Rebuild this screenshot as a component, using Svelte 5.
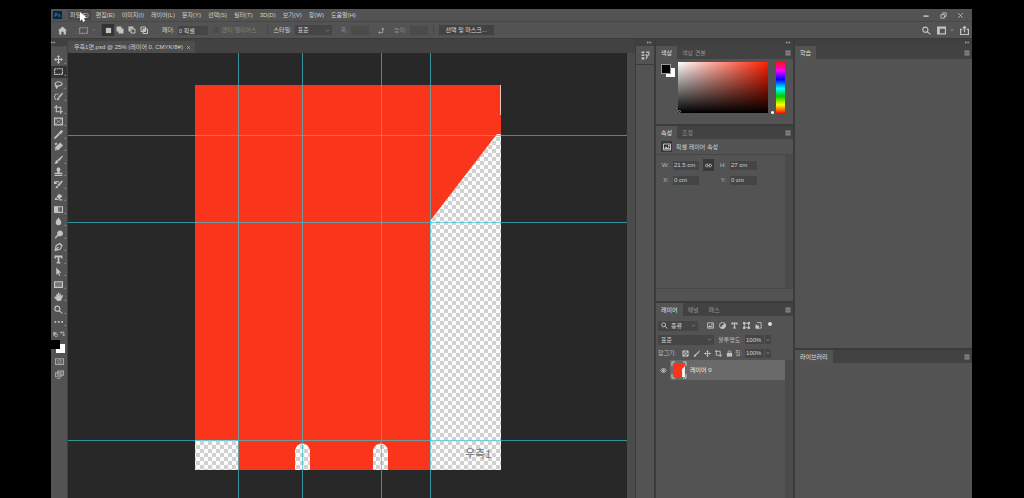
<script>
  const menus = ['파일(F)', '편집(E)', '이미지(I)', '레이어(L)', '문자(Y)', '선택(S)', '필터(T)', '3D(D)', '보기(V)', '창(W)', '도움말(H)'];

  // Each icon sits on a 16 x 16 grid: s = stroked path, f = filled path.
  const icons = {
    move: { s: 'M8 2v12M2 8h12', f: 'M8 0l3 4H5zM8 16l3-4H5zM0 8l4-3v6zM16 8l-4-3v6z' },
    marquee: { dash: 'M1 3h14v10H1z' },
    lasso: { s: 'M4 10C0 8 2 3 8 3s8 4 5 6-6 2-9 1zM4 10c-2 1-1 3 1 2s1 2-1 3' },
    quick: { dash: 'M8 13a5 5 0 1 1 0-9', f: 'M15 1l1 2-6 7-2-2zM7 9l3 2c-1 3-3 3-5 3 2-2 1-3 2-5z' },
    crop: { s: 'M4 0v12h12M0 4h12v12' },
    frame: { s: 'M1 2h14v12H1z', thin: 'M1 2l14 12M15 2L1 14' },
    dropper: { s: 'M9 6l-7 7-1 2 2-1 7-7', f: 'M8 4l2-1 2-2c2-2 5 1 3 3l-2 2-1 2z' },
    heal: { f: 'M11 1l5 5-9 9-6-5zM1 3l3-2 2 2-3 3z', s: 'M2 12l2 3' },
    brush: { f: 'M15 1l1 1-7 9-3-2zM5 9l3 3c-1 3-4 4-7 3 2-2 1-4 4-6z' },
    stamp: { f: 'M6 8C3 4 5 1 8 1s5 3 2 7v2h5v3H1v-3h5zM1 14h14v2H1z' },
    history: { f: 'M14 1l2 1-7 9-3-2zM5 10l3 2c-1 2-3 3-6 3 2-2 1-3 3-5z', s: 'M2 6c1-4 5-4 7-2M1 2v4h4' },
    eraser: { f: 'M9 3l6 4-5 6-6-4zM3 10l6 4H2c-1-1-1-2 1-4z', s: 'M9 14h6' },
    gradient: { f: 'M1 3h6v10H1z', s: 'M1 3h14v10H1z', tint: 'M7 3h4v10H7z' },
    blur: { f: 'M8 1c3 4 5 6 5 9 0 6-10 6-10 0 0-3 2-5 5-9z' },
    dodge: { f: 'M10 1a5 5 0 1 1-2 9l-5 5-2-1 5-6a5 5 0 0 1 4-7z' },
    pen: { s: 'M2 15l2-9 6-3 4 4-3 6zM2 15l6-6M10 2l5 5' },
    type: { f: 'M1 1h14v5h-2l-1-2H9.500v8.500l2 .5v2H4.500v-2l2-.5V4H4L3 6H1z' },
    arrow: { f: 'M4 1l9 9H9l2 5-2 1-2-5-3 3z' },
    rect: { s: 'M1 3h14v10H1z', tint: 'M1 3h14v10H1z' },
    hand: { f: 'M4 9V4l2-1 1 4V1h2v6l1-5 2 1v5l2-3 2 1-3 8-3 3H7l-4-4-3-4 2-1z' },
    zoom: { s: 'M6 2a4 4 0 1 1 0 9 4 4 0 0 1 0-9M9 10l6 5' },
    dots: { f: 'M1 7h3v3H1zM7 7h3v3H7zM13 7h3v3h-3z' },
    home: { f: 'M8 1l8 7h-2v7h-4v-5H6v5H2V8H0z' },
    selNew: { f: 'M2 2h12v12H2z' },
    selAdd: { f: 'M1 1h10v4h4v10H5v-4H1z' },
    selSub: { f: 'M1 1h10v4H5v6H1z', s: 'M6 6h8v8H6z' },
    selInt: { s: 'M2 2h9v9H2zM6 6h9v9H6z', f: 'M6 6h5v5H6z' },
    swap: { s: 'M3 13h8V4', f: 'M5 9v7l-5-3.500zM7 6h8l-4-5z' },
    layout: { s: 'M1 2h14v12H1zM1 4h14', f: 'M1 2h4v12H1z' },
    share: { s: 'M4 6H1v9h14V6h-3M8 11V2M5 4l3-3 3 3' },
    actions: { f: 'M1 1h5v3H1zM1 6h5v3H1zM1 11h5v4H1z', s: 'M9 2h5v5H9l2 3-2 4' },
    image: { s: 'M1 2h14v12H1z', f: 'M2 12l4-5 3 3 2-2 3 4zM10 4h3v3h-3z' },
    adjust: { s: 'M8 1a7 7 0 1 1 0 14A7 7 0 0 1 8 1', f: 'M13 3a7 7 0 0 1-10 10z' },
    shape: { s: 'M3 3h10v10H3z', f: 'M0 0h5v5H0zM11 0h5v5h-5zM0 11h5v5H0zM11 11h5v5h-5z' },
    smart: { s: 'M5 1h9v13H3V5', f: 'M1 8h8v7H1z' },
    checker: { s: 'M2 2h12v12H2z', f: 'M2 2h4v4H2zM10 2h4v4h-4zM6 6h4v4H6zM2 10h4v4H2zM10 10h4v4h-4z' },
    artboard: { s: 'M3 0v12h13M0 3h12v13' },
    lock: { f: 'M2 7h12v8H2z', s: 'M5 7V4c0-3 6-3 6 0v3' },
    eye: { s: 'M1 8c4-6 10-6 14 0-4 6-10 6-14 0z', f: 'M8 5a3 3 0 1 1 0 6 3 3 0 0 1 0-6' },
    link: { s: 'M7 5H4c-4 0-4 6 0 6h3M9 5h3c4 0 4 6 0 6H9M5 8h6' },
    mask: { s: 'M1 3h14v10H1z', dash: 'M8 5a3 3 0 1 1 0 6 3 3 0 0 1 0-6' },
    screen: { s: 'M5 2h10v7H5zM1 5h10v7H1zM4 15h5' },
    smallSwap: { s: 'M3 7V3h7v8M1 5l2-3 3 3M7 9l3 4 3-4' },
    min: { f: 'M1 9h14v4H1z' },
    restore: { s: 'M6 6V2h8v8h-4M2 6h8v8H2z' },
    close: { s: 'M3 3l10 10M13 3L3 13' },
    burger: { s: 'M1 3h14M1 8h14M1 13h14' },
    chevron: { s: 'M3 5l5 6 5-6' },
    collapse: { f: 'M0 4l7 4-7 4zM8 4l7 4-7 4z' }
  };

  const tools = [
    ['move', '이동'], ['marquee', '사각형 선택 윤곽'], ['lasso', '올가미'], ['quick', '빠른 선택'],
    ['crop', '자르기'], ['frame', '프레임'], ['dropper', '스포이드'], ['heal', '복구 브러시'],
    ['brush', '브러시'], ['stamp', '복제 도장'], ['history', '작업 내역 브러시'], ['eraser', '지우개'],
    ['gradient', '그레이디언트'], ['blur', '흐림 효과'], ['dodge', '닷지'], ['pen', '펜'],
    ['type', '문자'], ['arrow', '패스 선택'], ['rect', '사각형'], ['hand', '손'],
    ['zoom', '돋보기'], ['dots', '도구 모음 편집']
  ];
  let tool = $state('marquee');
  const filters = ['image', 'adjust', 'type', 'shape', 'smart'];
  const locks = ['checker', 'brush', 'move', 'artboard', 'lock'];
  const verticals = [170, 234, 313, 362];
  const horizontals = [82, 169, 387];
</script>

{#snippet icon(name, size = 9)}
  <svg class="ico" width={size} height={size} viewBox="0 0 16 16" aria-hidden="true">
    {#if icons[name].tint}<path class="tint" d={icons[name].tint} />{/if}
    {#if icons[name].s}<path class="stroke" d={icons[name].s} />{/if}
    {#if icons[name].thin}<path class="stroke thin" d={icons[name].thin} />{/if}
    {#if icons[name].dash}<path class="stroke dash" d={icons[name].dash} />{/if}
    {#if icons[name].f}<path class="fill" d={icons[name].f} />{/if}
  </svg>
{/snippet}

{#snippet tabs(names)}
  <div class="tabs" role="tablist">
    {#each names as name, i}
      <button class="tab" class:on={i === 0} role="tab" aria-selected={i === 0}>{name}</button>
    {/each}
    <button class="burger" aria-label="패널 메뉴">{@render icon('burger', 6)}</button>
  </div>
{/snippet}

{#snippet select(label, value, kind)}
  <span class="select {kind}">
    <select aria-label={label}><option>{value}</option></select>
    {@render icon('chevron', 5)}
  </span>
{/snippet}

<div class="app">
  <header class="menubar">
    <span class="logo">Ps</span>
    <nav>
      {#each menus as m, i}<button class:hover={i === 0}>{m}</button>{/each}
      <svg class="cursor" width="8" height="11" viewBox="0 0 8 11" aria-hidden="true"><path d="M1 0v9l2-2 1 3 2-1-1-3h3z" /></svg>
    </nav>
    <div class="window">
      <button aria-label="최소화">{@render icon('min', 6)}</button>
      <button aria-label="복원">{@render icon('restore', 7)}</button>
      <button aria-label="닫기">{@render icon('close', 7)}</button>
    </div>
  </header>

  <div class="options">
    <button class="home" aria-label="홈">{@render icon('home', 9)}</button>
    <button class="preset" aria-label="도구 사전 설정">{@render icon('marquee', 9)}{@render icon('chevron', 4)}</button>
    <div class="modes">
      <button class="on" aria-label="새 선택">{@render icon('selNew', 7)}</button>
      <button aria-label="추가">{@render icon('selAdd', 8)}</button>
      <button aria-label="빼기">{@render icon('selSub', 8)}</button>
      <button aria-label="교차">{@render icon('selInt', 8)}</button>
    </div>
    <div class="field feather"><label for="feather">페더:</label><input id="feather" value="0 픽셀" /></div>
    <label class="alias"><input type="checkbox" disabled />앤티 앨리어스</label>
    <div class="field style"><span>스타일:</span>{@render select('스타일', '표준', 'short')}</div>
    <div class="field dim"><label for="ow">폭:</label><input id="ow" disabled /></div>
    <button class="swap" aria-label="폭과 높이 교체">{@render icon('swap', 7)}</button>
    <div class="field dim"><label for="oh">높이:</label><input id="oh" disabled /></div>
    <div class="refine"><button>선택 및 마스크...</button></div>
    <div class="right">
      <button aria-label="검색">{@render icon('zoom', 9)}</button>
      <button class="pair" aria-label="작업 영역">{@render icon('layout', 9)}{@render icon('chevron', 4)}</button>
      <button aria-label="공유">{@render icon('share', 9)}</button>
    </div>
  </div>

  <div class="work">
    <aside class="toolbar">
      <div class="strip">{@render icon('collapse', 5)}</div>
      <div class="grip"></div>
      <div class="tools">
        {#each tools as [id, label]}
          <button class:on={tool === id} aria-label={label} onclick={() => (tool = id)}>{@render icon(id, 9)}</button>
        {/each}
      </div>
      <div class="mini">{@render icon('selSub', 5)}{@render icon('smallSwap', 6)}</div>
      <div class="colors"><i class="back"></i><i class="front"></i></div>
      <button class="extra" aria-label="빠른 마스크">{@render icon('mask', 9)}</button>
      <button class="extra" aria-label="화면 모드">{@render icon('screen', 9)}</button>
    </aside>

    <main class="doc">
      <div class="doctabs">
        <div class="doctab"><span>우측1면.psd @ 25% (레이어 0, CMYK/8#)</span><button aria-label="문서 닫기">{@render icon('close', 5)}</button></div>
      </div>
      <div class="stage">
        <svg class="canvas" role="img" aria-label="우측1">
          <defs>
            <pattern id="check" width="8" height="8" patternUnits="userSpaceOnUse">
              <rect width="8" height="8" fill="#fbfbfb" />
              <path d="M0 0h4v4H0zM4 4h4v4H4z" fill="#d0d0d0" />
            </pattern>
          </defs>
          <rect x="127" y="32" width="306" height="385" fill="#f9361c" />
          <path fill="url(#check)" d="M362 168L429 81h4v336h-71zM127 387h43v30h-43zM227 417v-19a7 7 0 0 1 15 0v19zM305 417v-19a7 7 0 0 1 15 0v19z" />
          <path d="M432.5 32v30" stroke="#f3c4bd" />
          <text x="397" y="405">우측1</text>
          <g class="guides">
            {#each horizontals as y}
              <rect x="0" {y} width="100%" height="1" />
            {/each}
            {#each verticals as x}
              <rect {x} y="0" width="1" height="100%" />
            {/each}
          </g>
        </svg>
        <div class="scroll"></div>
      </div>
    </main>

    <aside class="dock">
      <div class="strip">{@render icon('collapse', 5)}</div>
      <button aria-label="작업 내역">{@render icon('actions', 9)}</button>
      <div class="rest"></div>
    </aside>

    <aside class="panels">
      <div class="strip">{@render icon('collapse', 5)}</div>
      <section class="color">
        {@render tabs(['색상', '색상 견본'])}
        <div class="picker">
          <div class="colors big"><i class="back"></i><i class="front"></i></div>
          <div class="field2d"><i></i></div>
          <div class="hue"><i></i></div>
        </div>
      </section>

      <section class="props">
        {@render tabs(['속성', '조정'])}
        <h2><span>{@render icon('image', 8)}</span>픽셀 레이어 속성</h2>
        <div class="propbody">
          <div class="grid">
            <label for="pw">W:</label><input id="pw" value="21.5 cm" />
            <button class="link" aria-label="비율 고정">{@render icon('link', 7)}</button>
            <label for="ph">H:</label><input id="ph" value="27 cm" />
            <label for="px">X:</label><input id="px" value="0 cm" /><span></span>
            <label for="py">Y:</label><input id="py" value="0 cm" />
          </div>
          <div class="scroll"></div>
        </div>
      </section>

      <section class="layers">
        {@render tabs(['레이어', '채널', '패스'])}
        <div class="row filter">
          <span class="search">{@render icon('zoom', 7)}{@render select('필터', '종류', 'full')}</span>
          <div class="icons">
            {#each filters as f}<button aria-label={f}>{@render icon(f, 7)}</button>{/each}
            <button class="toggle" aria-label="필터 켜기"></button>
          </div>
        </div>
        <div class="row blend">
          {@render select('혼합 모드', '표준', 'wide')}
          <label for="op">불투명도:</label>
          <span class="num"><input id="op" value="100%" />{@render icon('chevron', 4)}</span>
        </div>
        <div class="row locks">
          <span class="caption">잠그기:</span>
          <div class="icons">
            {#each locks as l}<button aria-label={l}>{@render icon(l, 7)}</button>{/each}
          </div>
          <label for="fl">칠:</label>
          <span class="num"><input id="fl" value="100%" />{@render icon('chevron', 4)}</span>
        </div>
        <div class="list">
          <div class="items">
            <div class="layer">
              <button aria-label="표시">{@render icon('eye', 7)}</button>
              <div class="name">
                <svg width="16" height="18" viewBox="0 0 16 18" aria-hidden="true">
                  <path d="M2 2h12v14H2z" fill="#f9361c" /><path d="M14 5v11h-3V8z" fill="#eee" />
                  <path d="M1 5V1h3M12 1h3v4M15 13v4h-3M4 17H1v-4" fill="none" stroke="#ccc" />
                </svg>
                레이어 0
              </div>
            </div>
          </div>
          <div class="scroll"></div>
        </div>
      </section>
    </aside>

    <aside class="side">
      <div class="strip">{@render icon('collapse', 5)}</div>
      <section class="learn">{@render tabs(['학습'])}</section>
      <section class="library">{@render tabs(['라이브러리'])}</section>
    </aside>
  </div>
</div>

<style>
  :global(body) { background: #000; }
  .app, .app * { box-sizing: border-box; }
  .app {
    height: 100vh; padding: 9px 52px 0 51px; overflow: hidden;
    display: flex; flex-direction: column; background: #000; color: #d2d2d2;
    font: 6px/8px "Liberation Sans", "Noto Sans CJK KR", sans-serif;
  }
  button, input, select { font: inherit; color: inherit; border: 0; margin: 0; padding: 0; background: none; border-radius: 0; }
  button { display: flex; align-items: center; justify-content: center; white-space: nowrap; }
  input { min-width: 0; height: 9px; padding: 0 1px; background: #454545; }
  .ico { display: block; flex: none; color: #c4c4c4; }
  .stroke { fill: none; stroke: currentColor; stroke-width: 2; }
  .thin { stroke-width: 1; }
  .dash { stroke-dasharray: 3 1; }
  .fill { fill: currentColor; }
  .tint { fill: #777; }

  .menubar { height: 13px; flex: none; display: flex; align-items: center; background: #535353; border-bottom: 1px solid #484848; }
  .logo { width: 9px; height: 8px; margin: 0 6px 0 2px; background: #07263a; color: #2f9bd0; text-align: center; font-size: 5px; }
  nav { position: relative; display: flex; flex: 1; gap: 3px; }
  nav button { padding: 0 2px; height: 10px; }
  nav .hover { background: #474747; }
  .cursor { position: absolute; left: 11px; top: 2px; fill: #fff; }
  .window { display: flex; gap: 3px; padding-right: 5px; }
  .window button { width: 14px; height: 10px; }

  .options { height: 17px; flex: none; display: flex; align-items: center; background: #535353; border-bottom: 1px solid #3b3b3b; }
  .home { width: 22px; height: 12px; }
  .preset { width: 29px; gap: 4px; border-right: 1px solid #4a4a4a; height: 12px; }
  .preset .ico { color: #9a9a9a; }
  .modes { display: flex; }
  .modes button { width: 12px; height: 12px; }
  .modes .on { background: #333; }
  .field { display: flex; align-items: center; gap: 3px; white-space: nowrap; }
  .feather { margin-left: 12px; }
  .feather input { width: 30px; }
  .alias { display: flex; align-items: center; gap: 3px; margin-left: 5px; color: #808080; white-space: nowrap; }
  .alias input { appearance: none; width: 6px; height: 6px; background: #4b4b4b; }
  .style { margin-left: 10px; padding-left: 6px; border-left: 1px solid #484848; }
  .dim { margin-left: 9px; color: #848484; }
  .dim input { width: 18px; background: #4b4b4b; }
  .swap { margin-left: 9px; }
  .swap .ico { color: #a0a0a0; }
  .refine { margin-left: 5px; padding-left: 5px; border-left: 1px solid #484848; }
  .refine button { width: 55px; height: 10px; background: #424242; color: #dedede; }
  .right { margin-left: auto; display: flex; align-items: center; gap: 6px; padding-right: 3px; }
  .pair { gap: 4px; }
  .select { position: relative; display: flex; align-items: center; height: 10px; background: #454545; }
  .select select { appearance: none; width: 100%; padding: 0 8px 0 3px; line-height: 8px; outline: 0; }
  .select .ico { position: absolute; right: 2px; color: #8d8d8d; }
  .short { width: 37px; }
  .wide { width: 56px; }
  .full { flex: 1; min-width: 0; }

  .work { flex: 1; min-height: 0; display: flex; background: #3b3b3b; }
  .strip { height: 7px; flex: none; display: flex; align-items: center; background: #404040; }
  .strip .ico { color: #999; }

  .toolbar { width: 17px; flex: none; display: flex; flex-direction: column; background: #535353; border-right: 1px solid #404040; }
  .grip { height: 7px; margin: 0 3px; border-top: 1px solid #4a4a4a; }
  .tools { height: 275px; display: grid; grid-template-rows: repeat(22, 1fr); }
  .tools button { position: relative; padding-right: 1px; }
  .tools button::after { content: ''; position: absolute; right: 1px; bottom: 2px; border: 1px solid transparent; border-right-color: #888; border-bottom-color: #888; }
  .tools .on { background: #333; }
  .mini { height: 12px; display: flex; align-items: center; justify-content: center; gap: 2px; }
  .colors { position: relative; height: 14px; }
  .colors i { position: absolute; width: 9px; height: 9px; }
  .back { left: 5px; top: 4px; background: #fff; }
  .front { left: 0; top: 0; background: #000; }
  .extra { height: 12px; margin-top: 1px; }
  .extra .ico { color: #a5a5a5; }

  .doc { flex: 1; min-width: 0; display: flex; flex-direction: column; margin-right: 1px; }
  .doctabs { height: 14px; flex: none; background: #424242; display: flex; padding-top: 2px; }
  .doctab { display: flex; align-items: center; gap: 3px; padding: 0 4px 0 6px; background: #4d4d4d; white-space: nowrap; }
  .stage { flex: 1; min-height: 0; display: flex; }
  .canvas { flex: 1; min-width: 0; height: 100%; background: #282828; }
  .guides { fill: #3cc0cc; fill-opacity: .7; }
  .canvas text { font-size: 11px; fill: #777; }
  .scroll { width: 8px; flex: none; background: #4a4c4b; }

  .dock { width: 18px; flex: none; display: flex; flex-direction: column; margin-right: 2px; }
  .dock .strip, .panels > .strip, .side > .strip { justify-content: flex-end; padding-right: 2px; }
  .dock button { height: 18px; background: #535353; margin-bottom: 1px; }
  .rest { flex: 1; background: #535353; }

  .panels { width: 137px; flex: none; display: flex; flex-direction: column; margin-right: 2px; }
  .tabs { height: 13px; flex: none; display: flex; background: #424242; }
  .tab { padding: 0 5px; color: #939393; }
  .tab.on { background: #535353; color: #e0e0e0; }
  .burger { margin-left: auto; padding: 0 2px; }
  section { background: #535353; }
  .color { margin-bottom: 2px; }
  .picker { height: 65px; display: flex; padding: 3px 8px 11px 5px; }
  .big { width: 17px; flex: none; margin-top: 2px; }
  .big .front { border: 1px solid #999; width: 10px; height: 10px; }
  .field2d { position: relative; flex: 1; background: linear-gradient(to top, #000, transparent), linear-gradient(to right, #fff, #ff1e00); }
  .field2d i { position: absolute; left: 0; bottom: 0; width: 3px; height: 3px; border: 1px solid #999; border-radius: 50%; }
  .hue { position: relative; width: 9px; margin-left: 8px; background: linear-gradient(#f11, #f0f 17%, #00f 34%, #0ff 52%, #0c0 67%, #ff0 84%, #f10); }
  .hue i { position: absolute; left: -5px; bottom: -1px; width: 3px; height: 3px; border-radius: 50%; background: #fff; }

  .props { height: 175px; flex: none; display: flex; flex-direction: column; margin-bottom: 2px; }
  h2 { height: 16px; margin: 0; padding-left: 5px; display: flex; align-items: center; gap: 4px; font: inherit; border-bottom: 1px solid #464646; white-space: nowrap; }
  h2 span { width: 11px; height: 11px; background: #383838; display: grid; place-items: center; }
  .propbody { display: flex; height: 134px; border-bottom: 1px solid #484848; }
  .grid { flex: 1; display: grid; grid-template-columns: 8px 26px 11px 8px 27px; grid-auto-rows: 12px; gap: 3px 4px; align-content: start; align-items: center; padding: 4px 0 0 5px; }
  .grid label { text-align: right; color: #bbb; }
  .grid .link { height: 12px; background: #383838; }

  .layers { flex: 1; min-height: 0; display: flex; flex-direction: column; }
  .row { display: flex; align-items: center; height: 13px; padding: 0 22px 0 2px; white-space: nowrap; flex: none; }
  .row label { margin-left: auto; margin-right: 3px; color: #bbb; }
  .filter { height: 17px; padding: 2px 0 0 2px; }
  .search { width: 40px; height: 10px; background: #454545; display: flex; align-items: center; padding-left: 3px; }
  .icons { display: flex; }
  .icons button { width: 12px; height: 10px; }
  .search + .icons { margin-left: 6px; }
  .toggle::before { content: ''; width: 4px; height: 4px; border-radius: 50%; background: #ddd; margin-bottom: 4px; }
  .num { display: flex; align-items: center; gap: 1px; width: 26px; height: 9px; background: #454545; }
  .num input { width: 20px; padding: 0 1px; border-right: 1px solid #555; }
  .locks { height: 14px; }
  .locks .icons button { width: 11px; }
  .caption { width: 22px; color: #bbb; }
  .list { flex: 1; display: flex; min-height: 0; }
  .items { flex: 1; }
  .layer { display: flex; height: 20px; }
  .layer button { width: 14px; }
  .name { flex: 1; display: flex; align-items: center; gap: 3px; background: #6a6a6a; color: #eee; padding-left: 1px; }

  .side { width: 177px; flex: none; display: flex; flex-direction: column; }
  .learn { height: 302px; margin-bottom: 2px; flex: none; }
  .library { flex: 1; }
</style>
